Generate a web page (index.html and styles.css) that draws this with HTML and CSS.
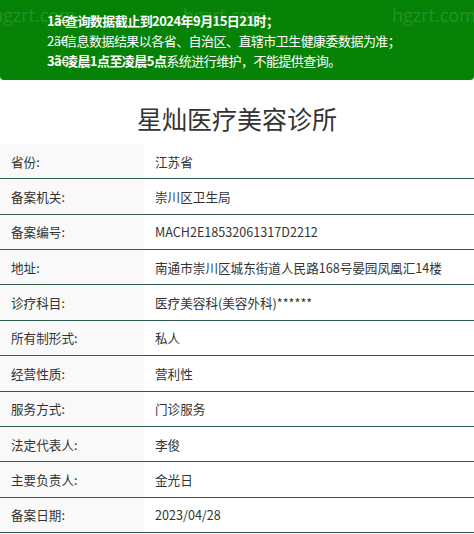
FILE: index.html
```
<!DOCTYPE html>
<html lang="zh-CN">
<head>
<meta charset="utf-8">
<link rel="stylesheet" href="styles.css">
</head>
<body>
<div class="notice">
  <p class="bold">1ã<span class="moji">€</span>查询数据截止到2024年9月15日21时；</p>
  <p>2ã<span class="moji">€</span>信息数据结果以各省、自治区、直辖市卫生健康委数据为准；</p>
  <p><b>3ã<span class="moji">€</span>凌晨1点至凌晨5点</b>系统进行维护，不能提供查询。</p>
  <span class="wm wm1">hgzrt.com</span>
  <span class="wm wm2">hgzrt.com</span>
  <span class="wm wm3">hgzrt.com</span>
</div>
<h1 class="title">星灿医疗美容诊所</h1>
<div class="table">
  <div class="row"><div class="label">省份:</div><div class="value">江苏省</div></div>
  <div class="row"><div class="label">备案机关:</div><div class="value">崇川区卫生局</div></div>
  <div class="row"><div class="label">备案编号:</div><div class="value">MACH2E18532061317D2212</div></div>
  <div class="row"><div class="label">地址:</div><div class="value">南通市崇川区城东街道人民路168号晏园凤凰汇14楼</div></div>
  <div class="row"><div class="label">诊疗科目:</div><div class="value">医疗美容科(美容外科)******</div></div>
  <div class="row"><div class="label">所有制形式:</div><div class="value">私人</div></div>
  <div class="row"><div class="label">经营性质:</div><div class="value">营利性</div></div>
  <div class="row"><div class="label">服务方式:</div><div class="value">门诊服务</div></div>
  <div class="row"><div class="label">法定代表人:</div><div class="value">李俊</div></div>
  <div class="row"><div class="label">主要负责人:</div><div class="value">金光日</div></div>
  <div class="row"><div class="label">备案日期:</div><div class="value">2023/04/28</div></div>
</div>
</body>
</html>
```
FILE: styles.css
```
* { box-sizing: border-box; }
html, body { margin: 0; padding: 0; background: #fff; }
body {
  font-family: "Noto Sans CJK SC", "Open Sans", sans-serif;
  color: #333;
  width: 474px;
  overflow: hidden;
}
.notice {
  position: relative;
  background: #068206;
  color: #fff;
  height: 80px;
  border-radius: 0 0 4px 4px;
  padding: 11px 0 0 47px;
  font-size: 13px;
  line-height: 20px;
  overflow: hidden;
}
.notice p { margin: 0; white-space: nowrap; letter-spacing: -0.55px; }
.notice .bold, .notice b { font-weight: 700; }
.moji { display: inline-block; margin-right: -3px; font-weight: 400; }
.wm {
  position: absolute;
  color: rgba(255,255,255,0.15);
  font-family: "Open Sans", sans-serif;
  font-size: 18px;
  line-height: 20px;
}
.wm1 { left: -8px; top: 5px; }
.wm2 { left: 183px; top: 5px; }
.wm3 { left: 392px; top: 5px; }
.title {
  margin: 0;
  height: 64px;
  padding-top: 20px;
  text-align: center;
  font-size: 25px;
  font-weight: 400;
  line-height: 36px;
  color: #333;
}
.table { display: flex; flex-direction: column; }
.row {
  display: flex;
  height: 35.36px;
  border-bottom: 1px solid #2e5c4c;
  font-size: 12.6px;
  align-items: stretch;
}
.label {
  width: 144px;
  background: #f9f9f9;
  padding-left: 11px;
  display: flex;
  align-items: center;
}
.value {
  flex: 1;
  padding-left: 11px;
  display: flex;
  align-items: center;
  white-space: nowrap;
}
```
